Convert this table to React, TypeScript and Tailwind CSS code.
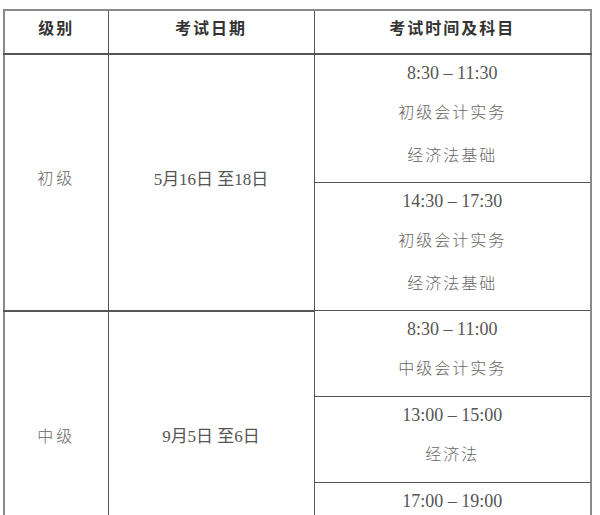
const rows = [
  {
    level: "初级",
    date: "5月16日 至18日",
    sessions: [
      { time: "8:30 – 11:30", subjects: ["初级会计实务", "经济法基础"] },
      { time: "14:30 – 17:30", subjects: ["初级会计实务", "经济法基础"] },
    ],
  },
  {
    level: "中级",
    date: "9月5日 至6日",
    sessions: [
      { time: "8:30 – 11:00", subjects: ["中级会计实务"] },
      { time: "13:00 – 15:00", subjects: ["经济法"] },
      { time: "17:00 – 19:00", subjects: ["财务管理"] },
    ],
  },
];

const cjk = "font-['Liberation_Serif','Noto_Sans_CJK_SC',serif]";

const App = () => {
  return (
    <div className={`bg-white w-[600px] min-h-[515px] pt-[9px] pl-[3px] ${cjk}`}>
      <table className="w-[589px] table-fixed border-collapse border-2 border-[#8a8a8a]">
        <colgroup>
          <col className="w-[104px]" />
          <col className="w-[206px]" />
          <col />
        </colgroup>
        <thead>
          <tr className="h-[44px]">
            {["级别", "考试日期", "考试时间及科目"].map((h) => (
              <th
                key={h}
                className="border border-[#555] border-b-2 pb-[6px] text-center align-middle text-[16px] font-semibold tracking-[2px] text-[#333]"
              >
                {h}
              </th>
            ))}
          </tr>
        </thead>
        <tbody>
          {rows.map((row) =>
            row.sessions.map((s, i) => (
              <tr key={row.level + s.time}>
                {i === 0 && (
                  <>
                    <td
                      rowSpan={row.sessions.length}
                      className="border border-[#555] border-b-2 pb-[6px] text-center align-middle text-[16px] font-light tracking-[3px] text-[#666]"
                    >
                      {row.level}
                    </td>
                    <td
                      rowSpan={row.sessions.length}
                      className="border border-[#555] border-b-2 pb-[6px] text-center align-middle text-[17px] text-[#555]"
                    >
                      {row.date}
                    </td>
                  </>
                )}
                <td
                  className={`border border-[#555] p-0 text-center align-top ${
                    s.subjects.length === 2 ? "pb-[5px]" : "pb-[6px]"
                  }`}
                >
                  <div className="h-[36px] flex items-center justify-center text-[18px] text-[#555]">
                    {s.time}
                  </div>
                  {s.subjects.map((sub) => (
                    <div
                      key={sub}
                      className="h-[43px] flex items-center justify-center text-[16px] font-light tracking-[2px] text-[#666]"
                    >
                      {sub}
                    </div>
                  ))}
                </td>
              </tr>
            ))
          )}
        </tbody>
      </table>
    </div>
  );
};

export default App;
